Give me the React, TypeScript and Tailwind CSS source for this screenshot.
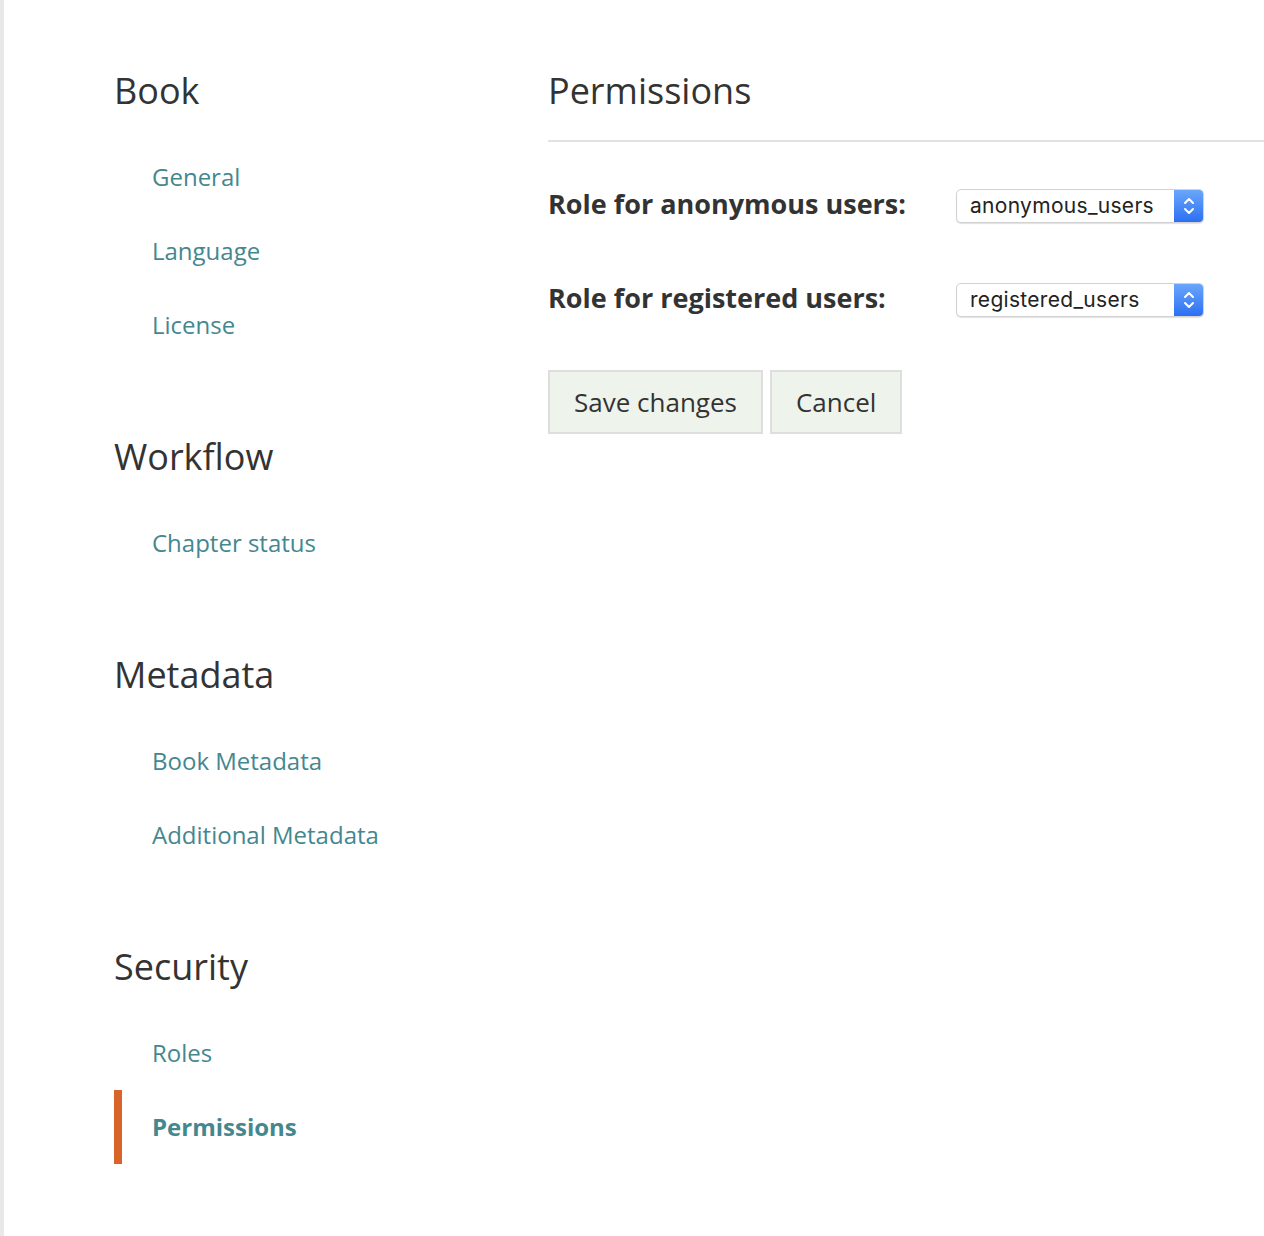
import * as React from 'react';

const sections = [
    { title: 'Book', links: ['General', 'Language', 'License'] },
    { title: 'Workflow', links: ['Chapter status'] },
    { title: 'Metadata', links: ['Book Metadata', 'Additional Metadata'] },
    { title: 'Security', links: ['Roles', 'Permissions'] },
];

function SelectBox({ value }: { value: string }) {
    return (
        <div className="flex h-[34px] w-[248px] items-stretch overflow-hidden rounded-[5px] border border-[#d2d2d2] bg-white shadow-[0_1px_1px_rgba(0,0,0,0.12)]">
            <div className="flex flex-1 items-center pl-[13px] font-['Inter',sans-serif] text-[21px] tracking-[0.3px] text-[#222]">
                {value}
            </div>
            <div className="flex w-[29px] items-center justify-center bg-gradient-to-b from-[#6aa6fb] to-[#2d6ff2]">
                <svg width="14" height="22" viewBox="0 0 14 22" fill="none" stroke="white" strokeWidth="2" strokeLinecap="round" strokeLinejoin="round">
                    <path d="M3 8 L7 4 L11 8" />
                    <path d="M3 14 L7 18 L11 14" />
                </svg>
            </div>
        </div>
    );
}

export default function App() {
    const active = 'Permissions';

    return (
        <div className="flex min-h-[1236px] border-l-4 border-[#e8e8e8] bg-white font-['Open_Sans',sans-serif] text-[#333]">
            {/* Sidebar */}
            <div className="w-[430px] shrink-0 pl-[110px] pt-[69px]">
                {sections.map((section, i) => (
                    <div key={section.title} className={i > 0 ? 'mt-[73px]' : ''}>
                        <h2 className="mb-[27px] h-[44px] text-[36px] leading-[44px] text-[#333]">
                            {section.title}
                        </h2>
                        <ul>
                            {section.links.map(link => (
                                <li
                                    key={link}
                                    className={
                                        'flex h-[74px] items-center border-l-8 pl-[30px] text-[24px] text-[#44878f] ' +
                                        (link === active ? 'border-[#d9642a] font-bold' : 'border-transparent')
                                    }
                                >
                                    {link}
                                </li>
                            ))}
                        </ul>
                    </div>
                ))}
            </div>

            {/* Main */}
            <div className="flex-1 pl-[114px] pt-[69px]">
                <h1 className="h-[44px] text-[36px] leading-[44px] text-[#333]">Permissions</h1>
                <div className="mt-[27px] h-[2px] bg-[#e2e2e2]" />

                <div className="mt-[47px] flex flex-col gap-[60px]">
                    <div className="flex h-[34px] items-center">
                        <label className="-mt-[3px] w-[408px] text-[27px] font-bold text-[#333]">Role for anonymous users:</label>
                        <SelectBox value="anonymous_users" />
                    </div>
                    <div className="flex h-[34px] items-center">
                        <label className="-mt-[3px] w-[408px] text-[27px] font-bold text-[#333]">Role for registered users:</label>
                        <SelectBox value="registered_users" />
                    </div>
                </div>

                <div className="mt-[53px] flex gap-[7px]">
                    <button className="h-[64px] border-2 border-[#dedede] bg-[#eef3ec] px-[24px] text-[26px] text-[#333]">
                        Save changes
                    </button>
                    <button className="h-[64px] border-2 border-[#dedede] bg-[#eef3ec] px-[24px] text-[26px] text-[#333]">
                        Cancel
                    </button>
                </div>
            </div>
        </div>
    );
}
